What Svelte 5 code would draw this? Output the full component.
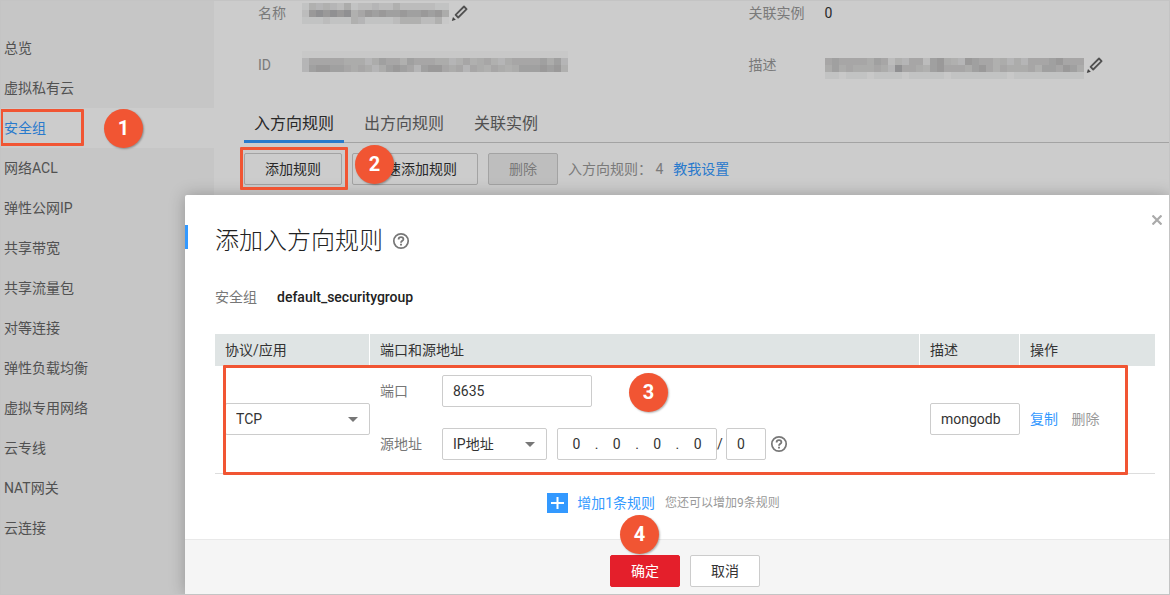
<script>
  const menu = ['总览', '虚拟私有云', '安全组', '网络ACL', '弹性公网IP', '共享带宽', '共享流量包', '对等连接', '弹性负载均衡', '虚拟专用网络', '云专线', 'NAT网关', '云连接'];
  const tabs = ['入方向规则', '出方向规则', '关联实例'];

  // Masked values: one letter per 7px cell, from a (clear) to k (dark).
  const nameMask = ['cfefedgcddeddfdddddcc', 'djkjkjkfhjijiijiijijg', 'cccdcccfeccccdfffddfb'];
  const idMask = ['bbbbbbbbbbbbbbbbbbbbbbbbbbbbbbbbbbbbbb', 'ehhhhhgggegihhfihhhggefhfghfeghhhhigie', 'eijjiihghgegijiheijjhghehgfhgfgiiijijf', 'aaaaaaaaaaaaaaaaaaaaaaaaaaaaaaaaaaaaaa'];
  const descMask = ['aaaaaaaaaaaaaaaaaaaaaaaaaaaaaaaaaaaaa', 'hihhhhgihdfehhdijgfejihhfgegehhhijhhh', 'gighggghgekhhgfijhhhgijhfhggghfiihjig', 'ccbcccbccccbcccccbccccccccbcccccccccc'];
  const shade = { a: 'none', b: '#fafafa', c: '#f3f4f4', d: '#ebebeb', e: '#e3e3e4', f: '#dcdcdb', g: '#d7d7d6', h: '#d1d0d0', i: '#c9c8c9', j: '#c1c0c0', k: '#b5b5b7' };

  let active = $state('安全组');
  let tab = $state('入方向规则');
  let protocol = $state('TCP');
  let port = $state('8635');
  let source = $state('IP地址');
  let ip = $state(['0', '0', '0', '0']);
  let bits = $state('0');
  let description = $state('mongodb');
</script>

{#snippet mosaic(rows)}
  <svg width={rows[0].length * 7} height={rows.length * 7} shape-rendering="crispEdges" aria-hidden="true">
    {#each rows as row, y}
      {#each row.split('') as cell, x}
        <rect x={x * 7} y={y * 7} width="7" height="7" fill={shade[cell]} />
      {/each}
    {/each}
  </svg>
{/snippet}

{#snippet pencil()}
  <button class="icon-button" aria-label="编辑">
    <svg width="18" height="18" viewBox="0 0 18 18" aria-hidden="true">
      <path d="M4.6 10.9 13 2.5 15.6 5.1 7.2 13.5Z" fill="none" stroke="#666" stroke-width="1.8" stroke-linejoin="round" />
      <path d="M0.8 17 2 13 4.8 15.8Z" fill="#555" />
    </svg>
  </button>
{/snippet}

{#snippet help()}
  <button class="icon-button" aria-label="帮助">
    <svg width="18" height="18" viewBox="0 0 18 18" fill="none" stroke="#777" aria-hidden="true">
      <circle cx="9" cy="9" r="7.2" stroke-width="1.7" />
      <path d="M6.6 7.4C6.6 5.9 7.6 5.1 9 5.1S11.4 6 11.4 7.2C11.4 8.8 9 8.9 9 10.8" stroke-width="1.8" />
      <path d="M9 11.8V13.5" stroke-width="1.9" />
    </svg>
  </button>
{/snippet}

<div class="page">
  <nav class="sidebar">
    {#each menu as item}
      <a href="#nav" class="nav-item" class:current={item === active} onclick={() => (active = item)}>
        {item}
        {#if item === '安全组'}
          <span class="outline outline-nav"></span>
          <span class="step step-nav">1</span>
        {/if}
      </a>
    {/each}
  </nav>

  <main class="content">
    <dl class="details">
      <div class="detail"><dt>名称</dt><dd>{@render mosaic(nameMask)}{@render pencil()}</dd></div>
      <div class="detail"><dt>关联实例</dt><dd>0</dd></div>
      <div class="detail"><dt>ID</dt><dd>{@render mosaic(idMask)}</dd></div>
      <div class="detail"><dt>描述</dt><dd>{@render mosaic(descMask)}{@render pencil()}</dd></div>
    </dl>

    <div class="tabs" role="tablist">
      {#each tabs as name}
        <button class="tab" role="tab" aria-selected={name === tab} class:selected={name === tab} onclick={() => (tab = name)}>{name}</button>
      {/each}
    </div>

    <div class="toolbar">
      <span class="anchor">
        <button class="button">添加规则</button>
        <span class="outline outline-add"></span>
        <span class="step step-add">2</span>
      </span>
      <button class="button">快速添加规则</button>
      <button class="button" disabled>删除</button>
      <span class="count">入方向规则： 4</span>
      <a class="link" href="#help">教我设置</a>
    </div>
  </main>

  <div class="backdrop"></div>

  <div class="dialog" role="dialog" aria-labelledby="dialog-title">
    <button class="close" aria-label="关闭">
      <svg width="10" height="10" viewBox="0 0 10 10" aria-hidden="true"><path d="M0.5 0.5 9.5 9.5M9.5 0.5 0.5 9.5" stroke="#aaa" stroke-width="2.2" /></svg>
    </button>
    <div class="body">
      <header class="heading">
        <h1 id="dialog-title">添加入方向规则</h1>
        {@render help()}
      </header>
      <p class="group"><span>安全组</span><strong>default_securitygroup</strong></p>

      <div class="rules">
        <table>
          <colgroup><col class="col-protocol" /><col /><col class="col-desc" /><col class="col-action" /></colgroup>
          <thead>
            <tr><th>协议/应用</th><th>端口和源地址</th><th>描述</th><th>操作</th></tr>
          </thead>
          <tbody>
            <tr>
              <td class="protocol">
                <span class="select">
                  <select aria-label="协议/应用" bind:value={protocol}><option>TCP</option><option>UDP</option></select>
                </span>
              </td>
              <td class="fields">
                <div class="field">
                  <label for="port">端口</label>
                  <input id="port" class="box port" bind:value={port} />
                </div>
                <div class="field">
                  <label for="source">源地址</label>
                  <span class="select source">
                    <select id="source" bind:value={source}><option>IP地址</option><option>安全组</option></select>
                  </span>
                  <span class="box ip">
                    {#each ip as _, i}
                      {#if i > 0}<span>.</span>{/if}
                      <input aria-label={`IP ${i + 1}`} bind:value={ip[i]} />
                    {/each}
                  </span>
                  <span class="slash">/</span>
                  <input class="box bits" aria-label="掩码" bind:value={bits} />
                  <span class="hint-icon">{@render help()}</span>
                </div>
              </td>
              <td class="desc"><input class="box" aria-label="描述" bind:value={description} /></td>
              <td class="actions">
                <a class="link" href="#copy">复制</a>
                <a class="muted" href="#delete">删除</a>
              </td>
            </tr>
          </tbody>
        </table>
        <span class="outline outline-rule"></span>
        <span class="step step-rule">3</span>
      </div>

      <div class="more">
        <button class="add">
          <svg width="21" height="20" viewBox="0 0 21 20" aria-hidden="true"><path fill="#39f" d="M0 0H21V20H0Z" /><path d="M4 10H17M10.5 4V16" stroke="#fff" stroke-width="2" /></svg>
          增加1条规则
        </button>
        <span class="remaining">您还可以增加9条规则</span>
      </div>
    </div>
    <footer class="footer">
      <span class="anchor">
        <button class="button primary">确定</button>
        <span class="step step-ok">4</span>
      </span>
      <button class="button">取消</button>
    </footer>
  </div>
</div>

<style>
  :global(body) {
    margin: 0;
  }
  .page {
    position: relative;
    display: grid;
    grid-template-columns: 213px 1fr;
    min-height: 100vh;
    box-sizing: border-box;
    border: 1px solid #c4c4c4;
    font: 400 14px/20px Roboto, 'Noto Sans CJK SC', sans-serif;
    color: #333;
    background: #fff;
    overflow: hidden;
  }
  button,
  input,
  select {
    font: inherit;
    color: inherit;
    box-sizing: border-box;
    margin: 0;
  }
  a {
    text-decoration: none;
  }
  .link {
    color: #39f;
  }
  .icon-button {
    display: inline-flex;
    padding: 0;
    border: 0;
    background: none;
  }

  .sidebar {
    padding-top: 27px;
    background: #f8f8f8;
  }
  .nav-item {
    position: relative;
    display: block;
    padding-left: 3px;
    line-height: 40px;
    color: #666;
  }
  .nav-item.current {
    color: #39f;
    background: #fff;
  }

  .content {
    padding: 2px 0 0 29px;
  }
  .details {
    display: grid;
    grid-template-columns: 490fr 420fr;
    row-gap: 32px;
    margin: 0;
    padding-left: 15px;
  }
  .detail {
    display: flex;
    align-items: center;
    height: 20px;
  }
  .detail dt {
    flex: none;
    width: 44px;
    color: #999;
  }
  .detail:nth-child(even) dt {
    width: 76px;
  }
  .detail dd {
    display: flex;
    align-items: center;
    gap: 2px;
    margin: 0;
    color: #333;
  }
  .tabs {
    display: flex;
    gap: 10px;
    margin: 32px 0 0 1px;
    border-bottom: 1px solid #ccc;
  }
  .tab {
    padding: 4px 10px;
    margin-bottom: -1px;
    border: 0;
    border-bottom: 3px solid transparent;
    background: none;
    font-size: 16px;
    line-height: 25px;
    color: #666;
  }
  .tab.selected {
    color: #333;
    border-color: #39f;
  }
  .toolbar {
    display: flex;
    align-items: center;
    gap: 10px;
    margin: 10px 0 0 1px;
    color: #999;
  }
  .anchor {
    position: relative;
    display: inline-flex;
  }
  .button {
    height: 32px;
    padding: 0 20px;
    border: 1px solid #ccc;
    border-radius: 2px;
    background: #fff;
    color: #333;
  }
  .button:disabled {
    background: #eee;
    color: #999;
  }
  .button.primary {
    border-color: #e41f2b;
    background: #e41f2b;
    color: #fff;
  }

  .backdrop {
    position: absolute;
    inset: 0;
    background: rgb(0 0 0 / 20%);
  }
  .dialog {
    position: absolute;
    top: 194px;
    left: 184px;
    right: 0;
    border-radius: 2px 0 0 0;
    background: #fff;
    box-shadow: 0 0 16px rgb(0 0 0 / 25%);
  }
  .close {
    position: absolute;
    top: 20px;
    right: 7px;
    display: flex;
    padding: 0;
    border: 0;
    background: none;
  }
  .body {
    padding: 30px 14px 26px 30px;
  }
  .heading {
    display: flex;
    align-items: center;
    gap: 9px;
    height: 32px;
    margin-left: -30px;
  }
  .heading::before {
    content: '';
    align-self: flex-start;
    width: 3px;
    height: 24px;
    margin-right: 18px;
    background: #39f;
  }
  h1 {
    margin: 0;
    font-size: 24px;
    font-weight: 300;
    line-height: 32px;
    color: #222;
  }
  .group {
    display: flex;
    gap: 20px;
    margin: 30px 0 27px;
    color: #777;
  }
  .group strong {
    font-weight: 500;
    color: #222;
  }
  .rules {
    position: relative;
  }
  table {
    width: 100%;
    border-collapse: collapse;
    table-layout: fixed;
  }
  .col-protocol {
    width: 155px;
  }
  .col-desc {
    width: 100px;
  }
  .col-action {
    width: 135px;
  }
  th {
    height: 32px;
    padding: 0 10px;
    box-sizing: border-box;
    text-align: left;
    font-weight: inherit;
    background: #dfe4e4;
  }
  th:not(:last-child) {
    box-shadow: inset -1px 0 #fff;
  }
  tbody tr {
    border-bottom: 1px solid #ddd;
  }
  td {
    padding: 0;
  }
  .protocol,
  .desc,
  .actions {
    padding: 0 0 2px 10px;
  }
  .select {
    position: relative;
    display: flex;
  }
  .select::after {
    content: '';
    position: absolute;
    top: 14px;
    right: 12px;
    border: 5px solid transparent;
    border-top-color: #777;
    border-bottom: 0;
    pointer-events: none;
  }
  .box,
  select {
    width: 100%;
    height: 32px;
    padding: 0 10px;
    border: 1px solid #ccc;
    border-radius: 2px;
    background: #fff;
  }
  select {
    appearance: none;
  }
  .fields {
    padding: 9px 10px 13px;
  }
  .field {
    display: flex;
    align-items: center;
  }
  .field + .field {
    margin-top: 21px;
  }
  .field label {
    width: 62px;
    color: #777;
  }
  .port {
    width: 150px;
  }
  .source {
    width: 105px;
  }
  .ip {
    display: flex;
    align-items: center;
    width: 160px;
    margin-left: 10px;
    padding: 0;
    box-sizing: border-box;
  }
  .ip input {
    flex: 1;
    min-width: 0;
    padding: 0;
    border: 0;
    background: none;
    text-align: center;
  }
  .slash {
    width: 9px;
  }
  .bits {
    width: 40px;
  }
  .hint-icon {
    display: flex;
    margin-left: 4px;
  }
  .desc .box {
    display: block;
  }
  .muted {
    margin-left: 10px;
    color: #999;
  }
  .more {
    display: flex;
    justify-content: center;
    align-items: center;
    gap: 10px;
    margin-top: 19px;
    padding-right: 43px;
  }
  .add {
    display: flex;
    align-items: center;
    gap: 9px;
    padding: 0;
    border: 0;
    background: none;
    color: #39f;
  }
  .remaining {
    font-size: 12px;
    color: #999;
  }
  .footer {
    display: flex;
    justify-content: center;
    gap: 10px;
    padding: 15px 14px 7px 30px;
    border-top: 1px solid #e9e9e9;
    background: #f5f5f5;
  }

  /* Walkthrough marks lie above the backdrop and the dialog. */
  .outline,
  .step {
    position: absolute;
    z-index: 2;
    pointer-events: none;
  }
  .outline {
    border: 3px solid #f15533;
    box-sizing: border-box;
    border-radius: 1px;
  }
  .step {
    width: 39px;
    height: 39px;
    border-radius: 50%;
    background: #f15533;
    box-shadow: 1px 1px 2px rgb(0 0 0 / 30%);
    color: #fff;
    font-size: 20px;
    font-weight: 700;
    line-height: 38px;
    text-align: center;
  }
  .outline-nav {
    top: 1px;
    left: -1px;
    width: 84px;
    height: 37px;
  }
  .step-nav {
    top: 1px;
    left: 103px;
  }
  .outline-add {
    inset: -6px -6px -5px -4px;
  }
  .step-add {
    top: -8px;
    left: 111px;
  }
  .outline-rule {
    inset: 31px 27px -1px 8px;
  }
  .step-rule {
    top: 39px;
    left: 414px;
  }
  .step-ok {
    top: -40px;
    left: 10px;
  }
</style>
